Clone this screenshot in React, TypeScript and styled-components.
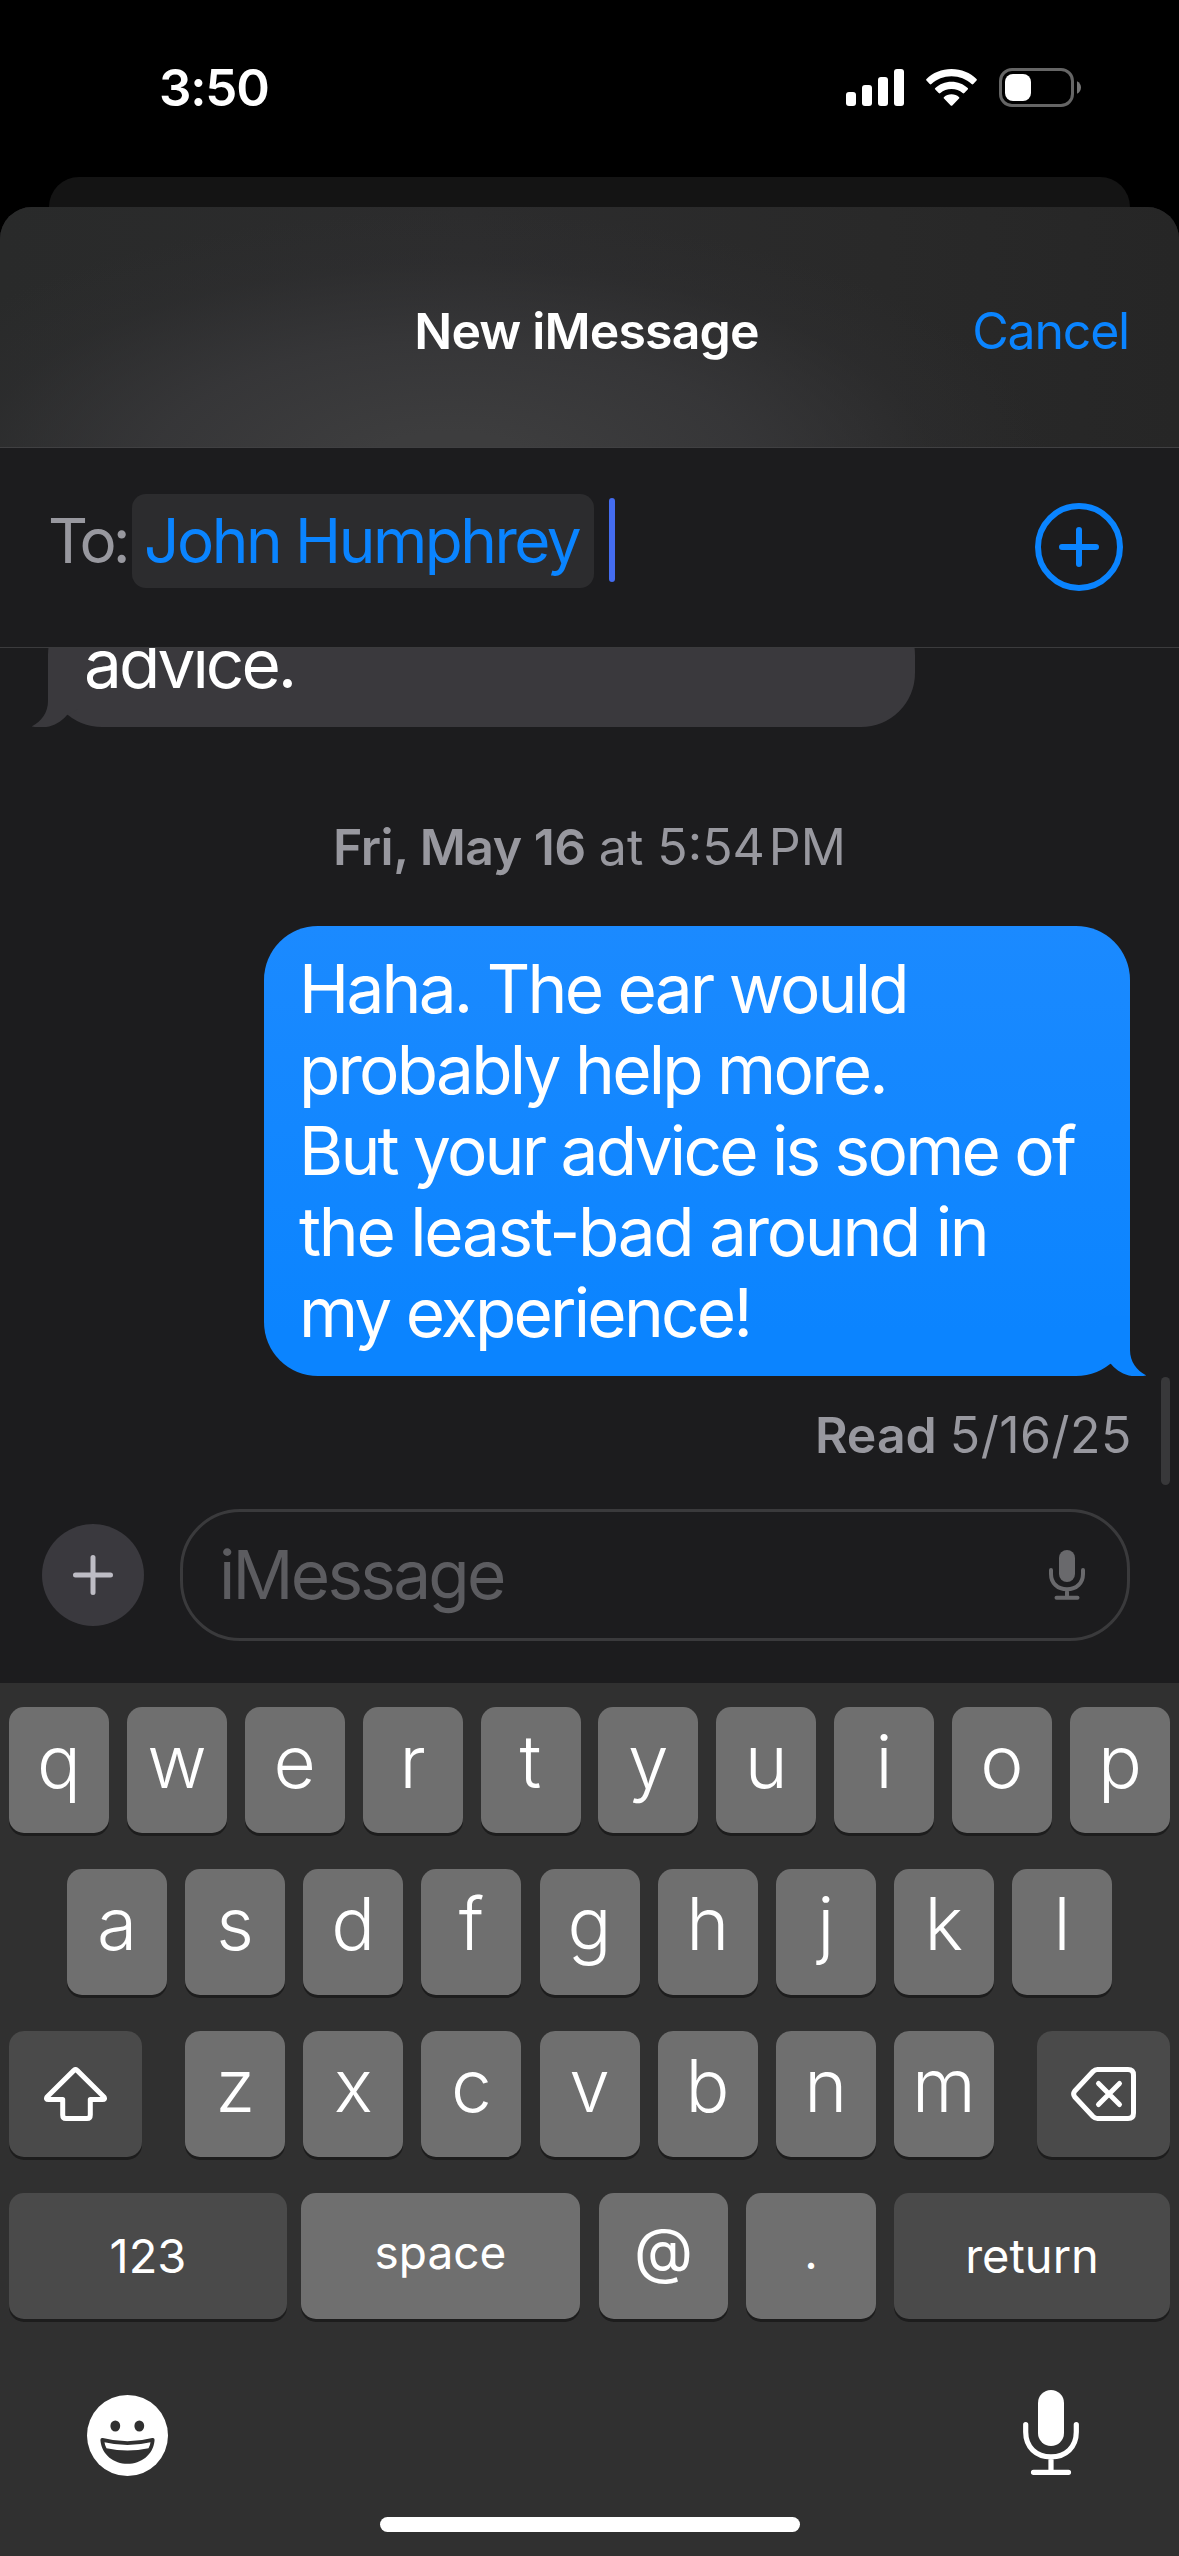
import React from 'react';
import styled, { createGlobalStyle } from 'styled-components';

const GlobalStyle = createGlobalStyle`
  * { box-sizing: border-box; }
  body {
    margin: 0;
    background: #000;
    font-family: Inter, "Liberation Sans", sans-serif;
    color: #fff;
  }
`;

const Screen = styled.div`
  display: flex;
  flex-direction: column;
  width: 1179px;
  height: 2556px;
  overflow: hidden;
  background: #000;
`;

/* Status bar */

const StatusBar = styled.header`
  display: flex;
  justify-content: space-between;
  align-items: center;
  height: 177px;
  padding: 0 98px 2px 159px;
`;

const Clock = styled.time`
  font-size: 51px;
  font-weight: 600;
  line-height: 60px;
  letter-spacing: -1.2px;
`;

const StatusIcons = styled.div`
  display: flex;
  align-items: center;
  gap: 22px;
  svg { display: block; }
`;

/* Sheets */

const BackSheet = styled.div`
  height: 30px;
  margin: 0 49px;
  border-radius: 30px 30px 0 0;
  background: #141414;
`;

const Sheet = styled.main`
  display: flex;
  flex-direction: column;
  flex: 1;
  min-height: 0;
  border-radius: 32px 32px 0 0;
  background: #1c1c1e;
  overflow: hidden;
`;

const SheetHeader = styled.div`
  display: grid;
  grid-template-columns: 1fr auto 1fr;
  align-items: center;
  height: 241px;
  padding: 8px 50px 0 44px;
  border-bottom: 1px solid #404042;
  background:
    radial-gradient(ellipse 600px 260px at 450px 110%, rgba(61, 61, 62, 1) 15%, rgba(56, 56, 58, 0.85) 50%, rgba(48, 48, 50, 0.35) 80%, rgba(42, 42, 43, 0)),
    linear-gradient(90deg, #292a2a, #2c2c2d 40%, #292929 75%, #262626);
`;

const Title = styled.h1`
  grid-column: 2;
  margin: 0;
  font-size: 50px;
  font-weight: 600;
  line-height: 60px;
  letter-spacing: -0.85px;
`;

const CancelButton = styled.button`
  justify-self: end;
  padding: 0;
  border: 0;
  background: none;
  color: #0a84ff;
  font: 400 50px/60px Inter, sans-serif;
  letter-spacing: -1.2px;
`;

/* Recipient row */

const RecipientRow = styled.div`
  display: flex;
  align-items: flex-start;
  height: 200px;
  padding: 46px 56px 0 48px;
  border-bottom: 1px solid #3b3b3d;
  font-size: 62px;
  line-height: 94px;
  white-space: nowrap;
`;

const ToLabel = styled.span`
  width: 84px;
  color: #98989f;
  letter-spacing: -3.8px;
`;

const Chip = styled.span`
  width: 462px;
  height: 94px;
  padding-left: 12px;
  border-radius: 14px;
  background: #2c2c2e;
  color: #0a84ff;
  letter-spacing: -2.45px;
`;

const Caret = styled.span`
  width: 6px;
  height: 84px;
  margin: 4px auto 0 15px;
  border-radius: 3px;
  background: #446cf0;
`;

const AddContact = styled.button`
  width: 88px;
  height: 88px;
  margin-top: 9px;
  padding: 0;
  border: 0;
  background: none;
  svg { display: block; }
`;

/* Conversation */

const Thread = styled.section`
  position: relative;
  display: flex;
  flex-direction: column;
  height: 837px;
  overflow: hidden;
`;

const Bubble = styled.div<{ $sent?: boolean }>`
  position: relative;
  flex: none;
  align-self: ${p => (p.$sent ? 'flex-end' : 'flex-start')};
  width: ${p => (p.$sent ? 866 : 867)}px;
  margin: ${p => (p.$sent ? '0 49px 0 0' : '-47px 0 0 48px')};
  padding: ${p => (p.$sent ? '22px 0 23px 35px' : '22px 0 23px 36px')};
  border-radius: 54px;
  background: ${p => (p.$sent ? 'linear-gradient(#1b8aff, #0b84ff 90%)' : '#3a393d')};
  font-size: 67.5px;
  line-height: 81px;
  white-space: nowrap;
`;

const Line = styled.div<{ $tracking?: number }>`
  letter-spacing: ${p => p.$tracking ?? -2.77}px;
`;

const Tail = styled.svg<{ $sent?: boolean }>`
  position: absolute;
  bottom: 0;
  ${p => (p.$sent ? 'right: -16px;' : 'left: -16px; transform: scaleX(-1);')}
  color: ${p => (p.$sent ? '#0b84ff' : '#3a393d')};
`;

const Timestamp = styled.div`
  display: flex;
  justify-content: center;
  margin: 90px 0 49px;
  color: #98989f;
  font-size: 50px;
  line-height: 60px;
  white-space: nowrap;
`;

const Day = styled.strong`
  margin-right: 13px;
  font-weight: 600;
  letter-spacing: -0.5px;
`;

const Meridiem = styled.span`
  margin-left: 4px;
`;

const Receipt = styled.div`
  display: flex;
  justify-content: flex-end;
  gap: 13px;
  margin: 29px 47px 0 0;
  color: #98989f;
  font-size: 50px;
  line-height: 60px;
  letter-spacing: 0.5px;
  strong { font-weight: 600; letter-spacing: 0; }
`;

const ScrollThumb = styled.div`
  position: absolute;
  right: 9px;
  bottom: 0;
  width: 9px;
  height: 108px;
  border-radius: 5px;
  background: #38383a;
`;

/* Composer */

const Composer = styled.div`
  display: flex;
  align-items: center;
  gap: 36px;
  height: 198px;
  padding: 0 49px 18px 42px;
`;

const AttachButton = styled.button`
  display: flex;
  align-items: center;
  justify-content: center;
  width: 102px;
  height: 102px;
  padding: 0;
  border: 0;
  border-radius: 50%;
  background: #3a393e;
`;

const MessageField = styled.div`
  display: flex;
  flex: 1;
  align-items: center;
  justify-content: space-between;
  height: 132px;
  padding: 0 42px 0 36px;
  border: 3px solid #3a3a3c;
  border-radius: 60px;
  color: #5c5c60;
  font-size: 67.5px;
  line-height: 80px;
  letter-spacing: -2.75px;
`;

/* Keyboard */

const Keyboard = styled.section`
  display: flex;
  flex-direction: column;
  gap: 36px;
  height: 873px;
  padding-top: 24px;
  background: #303030;
`;

const KeyRow = styled.div<{ $inset?: number }>`
  display: flex;
  justify-content: space-between;
  padding: 0 ${p => p.$inset ?? 9}px;
`;

const KeyGroup = styled.div<{ $gap: number }>`
  display: flex;
  gap: ${p => p.$gap}px;
`;

const Key = styled.button<{ $width?: number; $dark?: boolean; $size?: number; $lift?: number }>`
  display: flex;
  align-items: center;
  justify-content: center;
  width: ${p => p.$width ?? 100}px;
  height: 126px;
  padding: 0 0 ${p => (p.$lift ?? 0) * 2}px;
  border: 0;
  border-radius: 15px;
  background: ${p => (p.$dark ? '#4a4a4a' : '#6f6f6f')};
  box-shadow: 0 3px 0 #1d1d1d;
  color: #fff;
  font: 400 ${p => p.$size ?? 47}px/80px Inter, sans-serif;
`;

const LetterKey = styled(Key)`
  padding-bottom: 17px;
  font-size: 73px;
  font-weight: 350;
`;

const UtilityRow = styled.div`
  display: flex;
  justify-content: space-between;
  align-items: flex-start;
  height: 86px;
  margin-top: 35px;
  padding: 0 100px 0 87px;
`;

const EmojiIcon = styled.svg`
  margin-top: 5px;
`;

const HomeIndicator = styled.div`
  align-self: center;
  width: 420px;
  height: 15px;
  margin-top: 5px;
  border-radius: 8px;
  background: #fff;
`;

const TAIL_PATH = 'M0 0H30V34C30 46 37 55 46.5 59.4C32 62.5 20 58.5 11 48L0 42Z';

const Letters = ({ keys }: { keys: string }) => (
  <>{keys.split('').map(k => <LetterKey key={k}>{k}</LetterKey>)}</>
);

export default function App() {
  return (
    <Screen>
      <GlobalStyle />
      <StatusBar>
        <Clock>3:50</Clock>
        <StatusIcons>
          <svg width="58" height="37" fill="#fff">
            <rect x="0" y="23" width="10" height="14" rx="3" />
            <rect x="16" y="16" width="10" height="21" rx="3" />
            <rect x="32" y="8" width="10" height="29" rx="3" />
            <rect x="48" y="0" width="10" height="37" rx="3" />
          </svg>
          <svg width="51" height="37" viewBox="0 0 51 37" fill="#fff">
            <path d="M25.5 0C35.4 0 44.2 3.8 50.5 10Q51.3 10.8 50.5 11.6L47.3 15Q46.5 15.8 45.6 15C40.3 10.2 33.3 7.3 25.5 7.3S10.7 10.2 5.4 15Q4.5 15.8 3.7 15L.5 11.6Q-.3 10.8 .5 10C6.8 3.8 15.6 0 25.5 0Z" />
            <path d="M25.5 12.7C31.8 12.7 37.5 15.1 41.7 19Q42.6 19.8 41.7 20.6L38.3 24Q37.5 24.8 36.6 24C33.7 21.4 29.8 20 25.5 20S17.3 21.4 14.4 24Q13.5 24.8 12.7 24L9.3 20.6Q8.4 19.8 9.3 19C13.5 15.1 19.2 12.7 25.5 12.7Z" />
            <path d="M25.5 25.3C28.4 25.3 31 26.3 32.9 28Q33.8 28.8 33 29.6L26.3 36.5Q25.5 37.2 24.7 36.5L18 29.6Q17.2 28.8 18.1 28C20 26.3 22.6 25.3 25.5 25.3Z" />
          </svg>
          <svg width="82" height="39" viewBox="0 0 82 39">
            <rect x="1.5" y="1.5" width="72" height="36" rx="11.5" fill="none" stroke="#656565" strokeWidth="3" />
            <rect x="6" y="6" width="26" height="27" rx="8" fill="#fff" />
            <path d="M78 13.2C80.4 14.3 82 16.7 82 19.5S80.4 24.7 78 25.8Z" fill="#757575" />
          </svg>
        </StatusIcons>
      </StatusBar>

      <BackSheet />
      <Sheet>
        <SheetHeader>
          <Title>New iMessage</Title>
          <CancelButton>Cancel</CancelButton>
        </SheetHeader>

        <RecipientRow>
          <ToLabel>To:</ToLabel>
          <Chip>John Humphrey</Chip>
          <Caret />
          <AddContact aria-label="Add contact">
            <svg width="88" height="88" fill="none" stroke="#0a84ff" strokeWidth="6" strokeLinecap="round">
              <circle cx="44" cy="44" r="41" />
              <path d="M44 27V61M27 44H61" />
            </svg>
          </AddContact>
        </RecipientRow>

        <Thread>
          <Bubble>
            <Line $tracking={-3}>advice.</Line>
            <Tail width="46" height="60" fill="currentColor"><path d={TAIL_PATH} /></Tail>
          </Bubble>
          <Timestamp>
            <Day>Fri, May 16</Day>at 5:54<Meridiem>PM</Meridiem>
          </Timestamp>
          <Bubble $sent>
            <Line>Haha. The ear would</Line>
            <Line>probably help more.</Line>
            <Line>But your advice is some of</Line>
            <Line $tracking={-2.3}>the least-bad around in</Line>
            <Line>my experience!</Line>
            <Tail $sent width="46" height="60" fill="currentColor"><path d={TAIL_PATH} /></Tail>
          </Bubble>
          <Receipt><strong>Read</strong><span>5/16/25</span></Receipt>
          <ScrollThumb />
        </Thread>

        <Composer>
          <AttachButton aria-label="Attach">
            <svg width="40" height="40" stroke="#bdbcc4" strokeWidth="5" strokeLinecap="round">
              <path d="M20 2.5V37.5M2.5 20H37.5" />
            </svg>
          </AttachButton>
          <MessageField>
            <span>iMessage</span>
            <svg width="36" height="50" fill="none" stroke="#69696c" strokeWidth="4" strokeLinecap="round">
              <rect x="10" y="0" width="16" height="32" rx="8" fill="#69696c" stroke="none" />
              <path d="M2 20V24C2 33 8.5 39.3 18 39.3S34 33 34 24V20M18 40V47M7.5 47.7H28.5" />
            </svg>
          </MessageField>
        </Composer>

        <Keyboard>
          <KeyRow><Letters keys="qwertyuiop" /></KeyRow>
          <KeyRow $inset={67}><Letters keys="asdfghjkl" /></KeyRow>
          <KeyRow>
            <Key $dark $width={133} aria-label="Shift">
              <svg width="63" height="54" fill="none" stroke="#fff" strokeWidth="5" strokeLinejoin="round">
                <path d="M29.9 3.4Q31.5 2 33.1 3.4L60 30Q61.5 32.6 58.5 32.6H46.3V48Q46.3 51.5 43 51.5H22Q18.7 51.5 18.7 48V32.6H4.5Q1.5 32.6 3 30Z" />
              </svg>
            </Key>
            <KeyGroup $gap={18.1}><Letters keys="zxcvbnm" /></KeyGroup>
            <Key $dark $width={133} aria-label="Delete">
              <svg width="65" height="54" fill="none" stroke="#fff" strokeWidth="5" strokeLinecap="round" strokeLinejoin="round">
                <path d="M26.5 2.5H57Q62.5 2.5 62.5 8V46Q62.5 51.5 57 51.5H26.5Q24 51.5 22 49.5L3.8 30Q1.5 27 3.8 24L22 4.5Q24 2.5 26.5 2.5Z" />
                <path d="M27.5 16.5L48.5 37.5M48.5 16.5L27.5 37.5" />
              </svg>
            </Key>
          </KeyRow>
          <KeyRow>
            <KeyGroup $gap={14}>
              <Key $dark $width={278}>123</Key>
              <Key $width={279} $lift={4} $size={46}>space</Key>
            </KeyGroup>
            <KeyGroup $gap={18}>
              <Key $width={129} $lift={6} $size={61}>@</Key>
              <Key $width={130} $lift={4}>.</Key>
              <Key $dark $width={276}>return</Key>
            </KeyGroup>
          </KeyRow>
          <UtilityRow>
            <EmojiIcon width="81" height="81" viewBox="0 0 81 81">
              <circle cx="40.5" cy="40.5" r="40.5" fill="#fff" />
              <ellipse cx="28.3" cy="31" rx="4.9" ry="5.5" fill="#303030" />
              <ellipse cx="52.3" cy="31" rx="4.9" ry="5.5" fill="#303030" />
              <path d="M15.8 43Q40.5 49.5 65.2 43Q68 42.5 67.5 46C66 60 54 68.8 40.5 68.8S15 60 13.5 46Q13 42.5 15.8 43Z" fill="#303030" />
              <path d="M17.5 47.2Q40.5 52.8 63.5 47.2Q63.2 50.5 61.5 53.2Q40.5 58 19.5 53.2Q17.8 50.5 17.5 47.2Z" fill="#fff" />
            </EmojiIcon>
            <svg width="56" height="86" fill="none" stroke="#fff" strokeWidth="5.2" strokeLinecap="round">
              <rect x="15" y="0" width="26" height="56" rx="13" fill="#fff" stroke="none" />
              <path d="M2.7 34.5V42C2.7 57 13 66.8 28 66.8S53.3 57 53.3 42V34.5M28 67V81M10.5 82.3H45.5" />
            </svg>
          </UtilityRow>
          <HomeIndicator />
        </Keyboard>
      </Sheet>
    </Screen>
  );
}
